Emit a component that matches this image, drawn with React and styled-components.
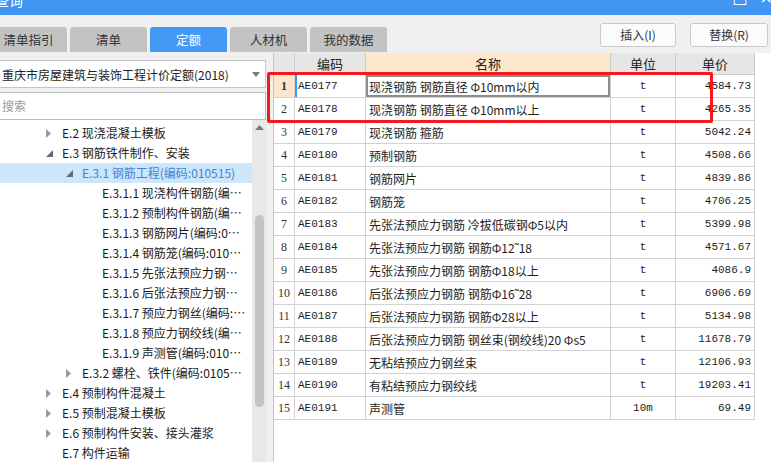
import React from "react";
import styled, { createGlobalStyle } from "styled-components";

const GlobalStyle = createGlobalStyle`
  html, body { margin: 0; padding: 0; background: #f0f0f0; }
  body { font-family: "Noto Sans CJK SC", sans-serif; }
`;

const treeItems = [
  { label: "E.2 现浇混凝土模板", level: 0, arrow: "closed" },
  { label: "E.3 钢筋铁件制作、安装", level: 0, arrow: "open" },
  { label: "E.3.1 钢筋工程(编码:010515)", level: 1, arrow: "open", selected: true },
  { label: "E.3.1.1 现浇构件钢筋(编码:010515001)", level: 2 },
  { label: "E.3.1.2 预制构件钢筋(编码:010515002)", level: 2 },
  { label: "E.3.1.3 钢筋网片(编码:010515003)", level: 2 },
  { label: "E.3.1.4 钢筋笼(编码:010515004)", level: 2 },
  { label: "E.3.1.5 先张法预应力钢筋(编码:010515005)", level: 2 },
  { label: "E.3.1.6 后张法预应力钢筋(编码:010515006)", level: 2 },
  { label: "E.3.1.7 预应力钢丝(编码:010515007)", level: 2 },
  { label: "E.3.1.8 预应力钢绞线(编码:010515008)", level: 2 },
  { label: "E.3.1.9 声测管(编码:010515009)", level: 2 },
  { label: "E.3.2 螺栓、铁件(编码:010516)", level: 1, arrow: "closed" },
  { label: "E.4 预制构件混凝土", level: 0, arrow: "closed" },
  { label: "E.5 预制混凝土模板", level: 0, arrow: "closed" },
  { label: "E.6 预制构件安装、接头灌浆", level: 0, arrow: "closed" },
  { label: "E.7 构件运输", level: 0 },
];

const rows = [
  ["AE0177", "现浇钢筋 钢筋直径 Φ10mm以内", "t", "4584.73"],
  ["AE0178", "现浇钢筋 钢筋直径 Φ10mm以上", "t", "4265.35"],
  ["AE0179", "现浇钢筋 箍筋", "t", "5042.24"],
  ["AE0180", "预制钢筋", "t", "4508.66"],
  ["AE0181", "钢筋网片", "t", "4839.86"],
  ["AE0182", "钢筋笼", "t", "4706.25"],
  ["AE0183", "先张法预应力钢筋 冷拔低碳钢Φ5以内", "t", "5399.98"],
  ["AE0184", "先张法预应力钢筋 钢筋Φ12˜18", "t", "4571.67"],
  ["AE0185", "先张法预应力钢筋 钢筋Φ18以上", "t", "4086.9"],
  ["AE0186", "后张法预应力钢筋 钢筋Φ16˜28", "t", "6906.69"],
  ["AE0187", "后张法预应力钢筋 钢筋Φ28以上", "t", "5134.98"],
  ["AE0188", "后张法预应力钢筋 钢丝束(钢绞线)20 Φs5", "t", "11678.79"],
  ["AE0189", "无粘结预应力钢丝束", "t", "12106.93"],
  ["AE0190", "有粘结预应力钢绞线", "t", "19203.41"],
  ["AE0191", "声测管", "10m", "69.49"],
];

const tabs = ["清单指引", "清单", "定额", "人材机", "我的数据"];

export default function App() {
  return (
    <>
      <GlobalStyle />
      <Window>
        <TitleBar>
          <Title>查询</Title>
          <WinControls>
            <span>□</span>
            <span>×</span>
          </WinControls>
        </TitleBar>

        <Toolbar>
          <Tabs>
            {tabs.map((t) => (
              <Tab key={t} $active={t === "定额"}>
                {t}
              </Tab>
            ))}
          </Tabs>
          <Actions>
            <ActionButton $w={76}>插入(I)</ActionButton>
            <ActionButton $w={78}>替换(R)</ActionButton>
          </Actions>
        </Toolbar>

        <Main>
          <LeftPanel>
            <Select>
              <span>重庆市房屋建筑与装饰工程计价定额(2018)</span>
              <svg width="8" height="5" viewBox="0 0 8 5">
                <polygon points="0,0 8,0 4,5" fill="#7a7a7a" />
              </svg>
            </Select>
            <Search>搜索</Search>
            <TreeArea>
              <Tree>
                {treeItems.map((it) => (
                  <TreeRow key={it.label} $level={it.level} $selected={it.selected}>
                    <Arrow>
                      {it.arrow === "closed" && (
                        <svg width="5" height="9" viewBox="0 0 5 9">
                          <polygon points="0,0 5,4.5 0,9" fill="#9a9a9a" />
                        </svg>
                      )}
                      {it.arrow === "open" && (
                        <svg width="7" height="7" viewBox="0 0 7 7">
                          <polygon points="7,0 7,7 0,7" fill="#6a6a6a" />
                        </svg>
                      )}
                    </Arrow>
                    <TreeLabel>{it.label}</TreeLabel>
                  </TreeRow>
                ))}
              </Tree>
              <ScrollTrack>
                <svg width="9" height="5" viewBox="0 0 9 5">
                  <polygon points="4.5,0 9,5 0,5" fill="#7b7b7b" />
                </svg>
                <ScrollThumb />
              </ScrollTrack>
            </TreeArea>
          </LeftPanel>

          <GridPane>
            <Table>
              <HeadCell />
              <HeadCell>编码</HeadCell>
              <HeadCell $hl>名称</HeadCell>
              <HeadCell>单位</HeadCell>
              <HeadCell>单价</HeadCell>
              {rows.map((r, i) => (
                <React.Fragment key={r[0]}>
                  <NumCell $current={i === 0}>{i + 1}</NumCell>
                  <CodeCell $current={i === 0}>{r[0]}</CodeCell>
                  <NameCell $focused={i === 0}>{r[1]}</NameCell>
                  <UnitCell>{r[2]}</UnitCell>
                  <PriceCell>{r[3]}</PriceCell>
                </React.Fragment>
              ))}
            </Table>
          </GridPane>
        </Main>

        <Highlight />
      </Window>
    </>
  );
}

const Window = styled.div`
  position: relative;
  width: 771px;
  height: 462px;
  overflow: hidden;
  background: #f0f0f0;
  display: flex;
  flex-direction: column;
`;

const TitleBar = styled.div`
  height: 15px;
  flex: none;
  background: #4096f2;
  color: #fff;
  display: flex;
  justify-content: space-between;
  overflow: hidden;
`;

const Title = styled.span`
  font-size: 14px;
  line-height: 14px;
  margin-top: -7px;
  margin-left: -5px;
`;

const WinControls = styled.div`
  display: flex;
  gap: 12px;
  margin-top: -10px;
  margin-right: -2px;
  font-family: "DejaVu Sans", sans-serif;
  font-size: 16px;
  line-height: 16px;
`;

const Toolbar = styled.div`
  height: 38px;
  flex: none;
  display: flex;
  justify-content: space-between;
`;

const Tabs = styled.div`
  align-self: flex-end;
  display: flex;
  gap: 3px;
  margin-left: -10px;
  margin-bottom: 1px;
`;

const Tab = styled.div`
  width: 77px;
  height: 25px;
  border-radius: 3px 3px 0 0;
  background: ${({ $active }) => ($active ? "#4499f5" : "#c3c3c3")};
  color: ${({ $active }) => ($active ? "#fff" : "#333")};
  font-size: 12.5px;
  line-height: 25px;
  text-align: center;
`;

const Actions = styled.div`
  align-self: flex-start;
  display: flex;
  gap: 14px;
  margin-top: 8px;
  margin-right: 3px;
`;

const ActionButton = styled.div`
  width: ${({ $w }) => $w}px;
  height: 24px;
  box-sizing: border-box;
  border: 1px solid #c9c9c9;
  border-radius: 3px;
  background: #fbfbfb;
  color: #333;
  font-size: 12px;
  line-height: 22px;
  text-align: center;
`;

const Main = styled.div`
  flex: 1;
  min-height: 0;
  display: flex;
  gap: 7px;
`;

const LeftPanel = styled.div`
  width: 266px;
  flex: none;
  display: flex;
  flex-direction: column;
  padding-top: 7px;
`;

const Select = styled.div`
  height: 28px;
  box-sizing: border-box;
  border: 1px solid #c6c6c6;
  border-left: none;
  background: #fff;
  display: flex;
  align-items: center;
  justify-content: space-between;
  padding: 0 5px 0 2px;
  font-size: 12px;
  color: #222;
`;

const Search = styled.div`
  height: 28px;
  margin-top: 4px;
  box-sizing: border-box;
  border: 1px solid #bdbdbd;
  border-left: none;
  background: #fff;
  padding-left: 2px;
  font-size: 12px;
  line-height: 26px;
  color: #9a9a9a;
`;

const TreeArea = styled.div`
  flex: 1;
  min-height: 0;
  display: flex;
  background: #fff;
`;

const Tree = styled.div`
  flex: 1;
  min-width: 0;
  padding-top: 3px;
`;

const TreeRow = styled.div`
  height: 20px;
  display: flex;
  align-items: center;
  padding-left: ${({ $level }) => 42 + $level * 20}px;
  padding-right: 6px;
  background: ${({ $selected }) => ($selected ? "#cce6fb" : "transparent")};
  color: ${({ $selected }) => ($selected ? "#3f82d8" : "#1a1a1a")};
  font-size: 12px;
  line-height: 16px;
`;

const Arrow = styled.span`
  width: 20px;
  flex: none;
  display: flex;
  align-items: center;
  padding-left: 4px;
  box-sizing: border-box;
`;

const TreeLabel = styled.span`
  white-space: nowrap;
  overflow: hidden;
  text-overflow: ellipsis;
`;

const ScrollTrack = styled.div`
  width: 14px;
  flex: none;
  background: #e8e8e8;
  display: flex;
  flex-direction: column;
  align-items: center;
  padding-top: 5px;
  box-sizing: border-box;
`;

const ScrollThumb = styled.div`
  width: 9px;
  height: 192px;
  margin-top: 85px;
  border-radius: 5px;
  background: #c3c3c3;
`;

const GridPane = styled.div`
  flex: 1;
  background: #fff;
  border-left: 1px solid #c4c4c4;
`;

const Table = styled.div`
  display: grid;
  width: 481px;
  grid-template-columns: 21px 71px 245px 65px 79px;
  grid-template-rows: 22px;
  grid-auto-rows: 23px;
`;

const Cell = styled.div`
  box-sizing: border-box;
  border-right: 1px solid #d3d3d3;
  border-bottom: 1px solid #d3d3d3;
  display: flex;
  align-items: center;
  white-space: nowrap;
  overflow: hidden;
  line-height: 15px;
  color: #1e1e1e;
`;

const HeadCell = styled(Cell)`
  justify-content: center;
  background: ${({ $hl }) => ($hl ? "#fde6c9" : "#e6e6e6")};
  border-color: #cbcbcb;
  font-size: 13px;
  color: #222;
`;

const NumCell = styled(Cell)`
  justify-content: center;
  font-family: "Liberation Serif", serif;
  font-size: 12px;
  font-weight: ${({ $current }) => ($current ? 700 : 400)};
  background: ${({ $current }) => ($current ? "#fde6c9" : "#fff")};
  color: #333;
`;

const CodeCell = styled(Cell)`
  padding-left: 3px;
  font-family: "Liberation Mono", monospace;
  font-size: 11px;
  box-shadow: ${({ $current }) => ($current ? "inset 2px 0 0 #3d9bf2" : "none")};
`;

const NameCell = styled(Cell)`
  padding-left: 3px;
  font-size: 12px;
  box-shadow: ${({ $focused }) => ($focused ? "inset 0 0 0 2px #8c8c8c" : "none")};
`;

const UnitCell = styled(Cell)`
  justify-content: center;
  font-family: "Liberation Mono", monospace;
  font-size: 11px;
`;

const PriceCell = styled(Cell)`
  justify-content: flex-end;
  padding-right: 3px;
  font-family: "Liberation Mono", monospace;
  font-size: 11px;
`;

const Highlight = styled.div`
  position: absolute;
  left: 267px;
  top: 72px;
  width: 446px;
  height: 51px;
  box-sizing: border-box;
  border: 3px solid #f5181c;
  border-radius: 2px;
  pointer-events: none;
`;
